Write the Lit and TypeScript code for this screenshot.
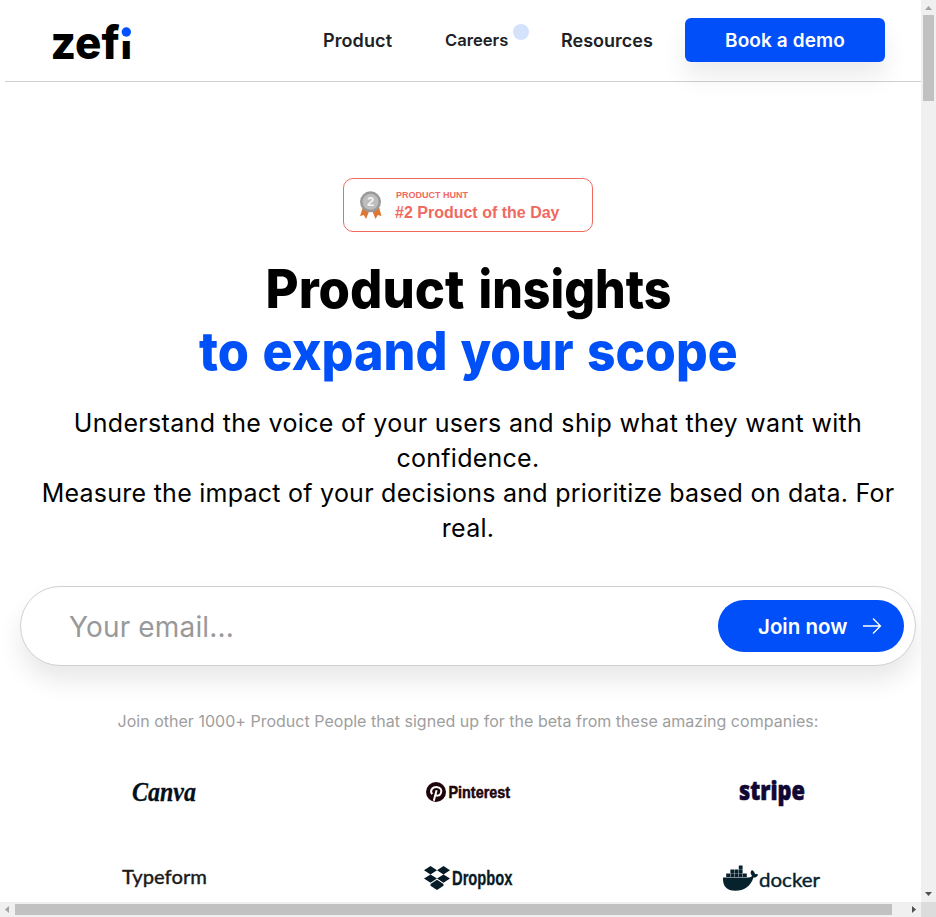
import { LitElement, html, css, svg } from "lit";
import { customElement } from "lit/decorators.js";

const label = (text: string, cls: string, x: number, y: number, length: number) =>
  svg`<text class=${cls} x=${x} y=${y} textLength=${length} lengthAdjust="spacingAndGlyphs">${text}</text>`;

@customElement("company-logos")
class CompanyLogos extends LitElement {
  static styles = css`
    :host { display: grid; grid-template-columns: repeat(3, 304px); justify-content: center; row-gap: 46px; }
    svg { display: block; width: 120px; height: 40px; margin: 0 auto; overflow: visible; }
    .canva { font: italic 600 28px "Liberation Serif", serif; fill: #04101c; stroke: #04101c; stroke-width: .3; }
    .pinterest { font: 700 16.5px "Liberation Sans", sans-serif; fill: #20050d; stroke: #20050d; stroke-width: .5; }
    .stripe { font: 800 27px "Open Sans", sans-serif; fill: #110733; stroke: #110733; stroke-width: .6; }
    .typeform { font: 500 20px Lato, sans-serif; fill: #1c1c1c; stroke: #1c1c1c; stroke-width: .3; }
    .dropbox { font: 700 20px "Liberation Sans", sans-serif; fill: #071b27; stroke: #071b27; stroke-width: .3; }
    .docker { font: 400 20px Lato, sans-serif; fill: #06222d; stroke: #06222d; stroke-width: .4; }
  `;
  render() {
    return html`
      <svg viewBox="0 0 120 40">${label("Canva", "canva", 28, 29, 64)}</svg>
      <svg viewBox="0 0 120 40">
        <circle cx="28" cy="20" r="10" fill="#20050d" />
        <path d="M24.2 22.2C21.8 19.5 23.6 14.9 28.4 14.9C32.7 14.9 34.2 18.2 32.8 21.3C31.5 24.2 28.5 24.2 27.5 22.4M28.6 18.2L25.8 28.8" fill="none" stroke="#fff" stroke-width="2" />
        ${label("Pinterest", "pinterest", 40.5, 25.5, 61.5)}
      </svg>
      <svg viewBox="0 0 120 40">${label("stripe", "stripe", 27, 28, 66)}</svg>
      <svg viewBox="0 0 120 40">${label("Typeform", "typeform", 18, 25.5, 85)}</svg>
      <svg viewBox="0 0 120 40">
        <path fill="#071b27" d="M22.5 8L29 12.2L22.5 16.4L16 12.2ZM35.5 8L42 12.2L35.5 16.4L29 12.2ZM22.5 16.4L29 20.6L22.5 24.8L16 20.6ZM35.5 16.4L42 20.6L35.5 24.8L29 20.6ZM29 21.8L35.5 26V27.8L29 32L22.5 27.8V26Z" />
        ${label("Dropbox", "dropbox", 44, 27, 60.5)}
      </svg>
      <svg viewBox="0 0 120 40">
        <path fill="#06222d" d="M11 19.5H36.5C38.5 19.5 39.5 18.8 40 17.8C38.2 15.7 38.2 13.4 40 12C42.2 13.3 43 15 42.9 16.2C44.5 15.9 46 16.2 46 17C44.9 19 43.5 19.7 41.5 19.6C38.4 28.7 32 32.8 23.5 32.8C14.5 32.8 10.6 28 11 19.5Z" />
        <path fill="#06222d" d="M14.2 15.6h3.8v3.4h-3.8zM18.4 15.6h3.8v3.4h-3.8zM22.6 15.6h3.8v3.4h-3.8zM26.8 15.6h3.8v3.4h-3.8zM31 15.6h3.8v3.4H31zM18.4 11.6h3.8v3.6h-3.8zM22.6 11.6h3.8v3.6h-3.8zM26.8 11.6h3.8v3.6h-3.8zM26.8 7.6h3.8v3.6h-3.8z" />
        ${label("docker", "docker", 47, 29, 61)}
      </svg>`;
  }
}

@customElement("app-root")
class AppRoot extends LitElement {
  static styles = css`
    :host { display: grid; grid-template: 902px 15px / 921px 15px; width: 936px; height: 917px; overflow: hidden; background: #fff; font-family: Inter, sans-serif; font-optical-sizing: none; }
    * { box-sizing: border-box; }
    .view { overflow: hidden; }
    .page { width: 926px; margin-left: 5px; }
    header { height: 82px; border-bottom: 1px solid #d0d0d0; display: flex; align-items: center; padding: 0 46px 1px 46px; }
    .logo { width: 90px; height: 50px; margin-right: auto; overflow: visible; }
    .zef { font: 800 46px Inter, sans-serif; }
    .stem { font: 900 32px Inter, sans-serif; }
    .nav { font-size: 18px; font-weight: 600; color: #202124; white-space: nowrap; position: relative; }
    .product { width: 122px; letter-spacing: .1px; }
    .careers { width: 116px; font-size: 16.6px; }
    .resources { width: 124px; }
    .dot { position: absolute; left: 68px; top: -6px; width: 16px; height: 16px; border-radius: 50%; background: #d4e3fb; }
    .demo { width: 200px; height: 44px; margin-top: -1px; border: 0; border-radius: 6px; background: #004ff8; color: #fff; font: 600 19px Inter, sans-serif; letter-spacing: .1px; padding: 1px 0 0; box-shadow: 0 15px 25px rgba(0,0,0,.08); white-space: nowrap; }
    .badge { width: 250px; height: 54px; margin: 96px auto 0; border: 1px solid #f06a60; border-radius: 10px; display: flex; align-items: center; padding-left: 15px; color: #f0695f; font-family: "Liberation Sans", sans-serif; font-weight: 700; }
    .medal { width: 24px; height: 30px; margin-right: 12px; }
    .num { font: 700 13px "Liberation Sans", sans-serif; fill: #f5f5f5; }
    .small { font-size: 9px; line-height: 11px; margin: 2px 0 0 1px; }
    .big { font-size: 16px; line-height: 18px; margin-top: 3px; }
    h1 { margin: 26px 0 0; height: 125px; }
    .title { display: block; width: 560px; height: 125px; margin: 0 auto; overflow: visible; }
    .head { font: 800 53px Inter, sans-serif; }
    .blue { fill: #0050f8; }
    .intro { margin: 23px 0 0; font-size: 25px; line-height: 35px; text-align: center; color: #000; white-space: nowrap; letter-spacing: .25px; }
    .row { display: block; }
    .lead { letter-spacing: .33px; }
    .signup { width: 896px; height: 80px; margin: 40px 0 0 15px; border: 1px solid #d0d0d0; border-radius: 40px; display: flex; align-items: center; padding: 0 11px 0 48px; background: #fff; box-shadow: 0 15px 25px rgba(0,0,0,.09); }
    .email { flex: 1; min-width: 0; border: 0; outline: 0; padding: 2px 0 0; background: none; font: 400 28px Inter, sans-serif; height: 50px; letter-spacing: .15px; }
    .email::placeholder { color: #999; opacity: 1; }
    .join { width: 186px; height: 52px; border: 0; border-radius: 26px; background: #004ff8; color: #fff; font: 600 20.5px Inter, sans-serif; display: flex; align-items: center; padding: 0 22px 0 40px; justify-content: space-between; white-space: nowrap; }
    .arrow { width: 20px; height: 20px; flex: none; }
    .caption { margin: 44px 0 0; text-align: center; font-size: 16px; line-height: 22px; color: #9e9e9e; white-space: nowrap; letter-spacing: .02px; }
    company-logos { margin-top: 40px; }
    .bar { background: #f0f0f0; display: flex; }
    .vertical { flex-direction: column; align-items: center; }
    .thumbv { width: 11px; height: 86px; background: #c1c1c1; margin-bottom: auto; }
    .thumbh { height: 11px; width: 877px; background: #c1c1c1; margin-right: auto; }
    .horizontal { align-items: center; }
    .tip { width: 15px; height: 15px; flex: none; fill: #505050; }
    .off { fill: #a3a3a3; }
    .corner { background: #dcdcdc; }
  `;
  render() {
    return html`
      <div class="view"><div class="page">
        <header>
          <svg class="logo" viewBox="0 0 90 50">
            ${label("zef", "zef", -0.5, 44, 69)}
            ${label("ı", "stem", 70, 44, 10.5)}
            <circle cx="75.3" cy="17" r="4.7" fill="#0050ff" />
          </svg>
          <div class="nav product">Product</div>
          <div class="nav careers">Careers<span class="dot"></span></div>
          <div class="nav resources">Resources</div>
          <button class="demo">Book a demo</button>
        </header>
        <div class="badge">
          <svg class="medal" viewBox="0 0 24 30">
            <path fill="#dc7834" d="M4 17L1 26L4.8 25L7 29L11 19ZM20 17L22.5 26L18.8 25L16.5 29L12.5 19Z" />
            <circle cx="11.5" cy="11.8" r="10.5" fill="#999" />
            <circle cx="11.5" cy="11.8" r="8" fill="#bdbdbd" />
            <text class="num" x="7.9" y="16.4">2</text>
          </svg>
          <div><div class="small">PRODUCT HUNT</div><div class="big">#2 Product of the Day</div></div>
        </div>
        <h1><svg class="title" viewBox="0 0 560 125">
          ${label("Product", "head", 77.5, 49.5, 199)}
          ${label("insights", "head", 290.5, 49.5, 193)}
          ${label("to", "head blue", 11, 111.5, 50)}
          ${label("expand", "head blue", 74.5, 111.5, 185)}
          ${label("your", "head blue", 272.5, 111.5, 113)}
          ${label("scope", "head blue", 399, 111.5, 150.5)}
        </svg></h1>
        <p class="intro">
          <span class="row lead">Understand the voice of your users and ship what they want with</span>
          <span class="row">confidence.</span>
          <span class="row">Measure the impact of your decisions and prioritize based on data. For</span>
          <span class="row">real.</span>
        </p>
        <div class="signup">
          <input class="email" placeholder="Your email..." />
          <button class="join">Join now
            <svg class="arrow" viewBox="0 0 20 20" fill="none" stroke="#fff" stroke-width="1.3"><path d="M1 10H18.5M11 2.5L18.5 10L11 17.5" /></svg>
          </button>
        </div>
        <p class="caption">Join other 1000+ Product People that signed up for the beta from these amazing companies:</p>
        <company-logos></company-logos>
      </div></div>
      <div class="bar vertical">
        <svg class="tip off" viewBox="0 0 15 15"><path d="M4 10L7.5 6L11 10Z" /></svg>
        <div class="thumbv"></div>
        <svg class="tip" viewBox="0 0 15 15"><path d="M4 5L7.5 9L11 5Z" /></svg>
      </div>
      <div class="bar horizontal">
        <svg class="tip off" viewBox="0 0 15 15"><path d="M9 4L5 7.5L9 11Z" /></svg>
        <div class="thumbh"></div>
        <svg class="tip" viewBox="0 0 15 15"><path d="M6 4L10 7.5L6 11Z" /></svg>
      </div>
      <div class="corner"></div>`;
  }
}
